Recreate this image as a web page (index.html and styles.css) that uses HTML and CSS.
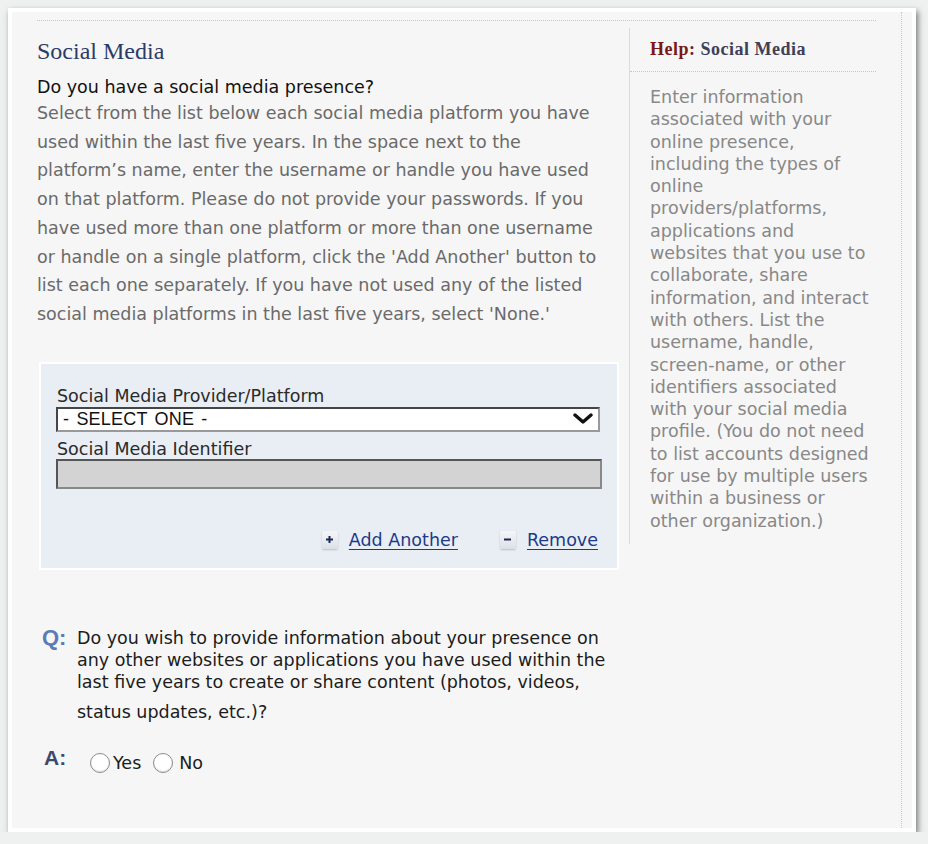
FILE: index.html
```html
<!DOCTYPE html>
<html lang="en">
<head>
<meta charset="utf-8">
<title>Social Media</title>
<link rel="stylesheet" href="styles.css">
</head>
<body>
<div class="window">
  <div class="page">
    <div class="content">
      <main class="main">
        <h1 class="title">Social Media</h1>
        <p class="prompt">Do you have a social media presence?</p>
        <p class="desc">Select from the list below each social media platform you have used within the last five years. In the space next to the platform’s name, enter the username or handle you have used on that platform. Please do not provide your passwords. If you have used more than one platform or more than one username or handle on a single platform, click the 'Add Another' button to list each one separately. If you have not used any of the listed social media platforms in the last five years, select 'None.'</p>

        <div class="entry">
          <div class="field-label">Social Media Provider/Platform</div>
          <div class="select">
            <span class="select-text">- SELECT ONE -</span>
            <svg class="chevron" width="20" height="12" viewBox="0 0 20 12"><path d="M2 2 L10 9 L18 2" fill="none" stroke="#111" stroke-width="3.4" stroke-linecap="round" stroke-linejoin="round"/></svg>
          </div>
          <div class="field-label second">Social Media Identifier</div>
          <div class="input"></div>
          <div class="actions">
            <a class="action" href="#"><span class="btn-icon"><svg width="9" height="9" viewBox="0 0 9 9"><path d="M4.5 1 V8 M1 4.5 H8" stroke="#1b2a55" stroke-width="2"/></svg></span><span class="action-text">Add Another</span></a>
            <a class="action" href="#"><span class="btn-icon"><svg width="9" height="9" viewBox="0 0 9 9"><path d="M1 4.5 H8" stroke="#1b2a55" stroke-width="2"/></svg></span><span class="action-text">Remove</span></a>
          </div>
        </div>

        <div class="qa">
          <div class="q-row">
            <span class="q-mark">Q:</span>
            <div class="q-text">
              <div>Do you wish to provide information about your presence on any other websites or applications you have used within the last five years to create or share content (photos, videos,</div>
              <div class="q-last">status updates, etc.)?</div>
            </div>
          </div>
          <div class="a-row">
            <span class="a-mark">A:</span>
            <label class="radio"><input type="radio" name="other"><span>Yes</span></label>
            <label class="radio"><input type="radio" name="other"><span>No</span></label>
          </div>
        </div>
      </main>

      <aside class="help">
        <div class="help-head"><span class="help-key">Help:</span> Social Media</div>
        <div class="help-body">Enter information associated with your online presence, including the types of online providers/platforms, applications and websites that you use to collaborate, share information, and interact with others. List the username, handle, screen-name, or other identifiers associated with your social media profile. (You do not need to list accounts designed for use by multiple users within a business or other organization.)</div>
      </aside>
    </div>
  </div>
</div>
</body>
</html>
```
FILE: styles.css
```css
* { box-sizing: border-box; }

html, body {
  margin: 0;
  padding: 0;
  background: #eff1f1;
  font-family: "DejaVu Sans", Verdana, sans-serif;
  font-size: 17.5px;
}

.window {
  margin: 8px 0 0 8px;
  width: 908px;
  height: 824px;
  border: 4px solid #ffffff;
  background: #f6f6f6;
  box-shadow: 2px 3px 6px rgba(0, 0, 0, 0.5);
}

.page {
  width: 890px;
  height: 100%;
  padding: 8px 25px 0 25px;
  border-right: 1px dotted #d6c6ac;
}

.content {
  border-top: 1px dotted #c6c6c6;
  padding-top: 7px;
  display: grid;
  grid-template-columns: 592px 247px;
  align-items: start;
}

.main { display: flex; flex-direction: column; }

.title {
  margin: 9px 0 0 0;
  font-family: "Liberation Serif", "Times New Roman", serif;
  font-weight: normal;
  font-size: 24px;
  line-height: 28px;
  color: #2b3b66;
}

.prompt {
  margin: 11px 0 0 0;
  line-height: 22px;
  color: #111;
}

.desc {
  margin: 1px 0 0 0;
  width: 574px;
  line-height: 28.7px;
  color: #6a6a6a;
}

.entry {
  margin: 33px 0 0 2px;
  width: 580px;
  border: 2px solid #ffffff;
  background: #e9eef5;
  padding: 21px 19px 17px 15px;
}

.field-label {
  line-height: 22px;
  color: #2a2a2a;
  padding-left: 1px;
}
.field-label.second {
  margin-top: 7px;
  line-height: 20px;
}

.select {
  width: 544px;
  height: 25px;
  background: #fff;
  border: 2px solid;
  border-color: #454545 #999 #999 #454545;
  display: flex;
  align-items: center;
  justify-content: space-between;
  padding: 0 5px 0 5px;
}
.select-text {
  font-family: "Liberation Sans", Arial, sans-serif;
  font-size: 18px;
  letter-spacing: 0.2px;
  word-spacing: 2px;
  color: #111;
}
.chevron { display: block; }

.input {
  width: 546px;
  height: 30px;
  background: #d3d3d3;
  border: 2px solid;
  border-color: #555 #888 #888 #555;
}

.actions {
  margin-top: 40px;
  display: flex;
  justify-content: flex-end;
  gap: 42px;
  line-height: 22px;
}
.action {
  display: flex;
  align-items: center;
  gap: 11px;
  color: #1d3a88;
  text-decoration: none;
}
.action-text {
  text-decoration: underline;
  text-underline-offset: 3px;
}
.btn-icon {
  width: 16px;
  height: 18px;
  display: flex;
  align-items: center;
  justify-content: center;
  background: linear-gradient(#f5f6f8, #dce0e6);
  border-radius: 2px;
  box-shadow: 0 1px 2px rgba(0, 0, 0, 0.2);
}

.qa { margin-top: 57px; }

.q-row {
  display: grid;
  grid-template-columns: 35px 540px;
  padding-left: 5px;
  line-height: 22px;
}
.q-mark {
  font-family: "Liberation Sans", Arial, sans-serif;
  font-weight: bold;
  font-size: 22px;
  color: #5b7bb6;
}
.q-text { color: #1c1c1c; }
.q-last { margin-top: 8px; }

.a-row {
  margin-top: 23px;
  padding-left: 7px;
  display: flex;
  align-items: center;
  line-height: 22px;
}
.a-mark {
  font-family: "Liberation Sans", Arial, sans-serif;
  font-weight: bold;
  font-size: 21px;
  color: #3b4a6b;
  width: 46px;
  align-self: flex-start;
  margin-top: 1px;
}
.radio {
  display: flex;
  align-items: center;
  color: #1c1c1c;
  margin-right: 12px;
  margin-top: 6px;
}
.radio input {
  appearance: none;
  -webkit-appearance: none;
  margin: 0 3px 0 0;
  width: 20px;
  height: 20px;
  border-radius: 50%;
  border: 1.5px solid #8c8c8c;
  background: #fff;
  box-shadow: inset 0 -1px 1px rgba(0, 0, 0, 0.12);
}
.radio + .radio input { margin-right: 6px; }

.help {
  border-left: 1px solid #dbdbdb;
}
.help-head {
  padding: 10px 0 11px 20px;
  border-bottom: 1px dotted #c6c6c6;
  font-family: "Liberation Serif", "Times New Roman", serif;
  font-weight: bold;
  font-size: 18px;
  letter-spacing: 0.5px;
  line-height: 22px;
  color: #3e4058;
}
.help-key { color: #7a1818; }
.help-body {
  padding: 14px 0 12px 20px;
  line-height: 22.3px;
  color: #888;
}
```
